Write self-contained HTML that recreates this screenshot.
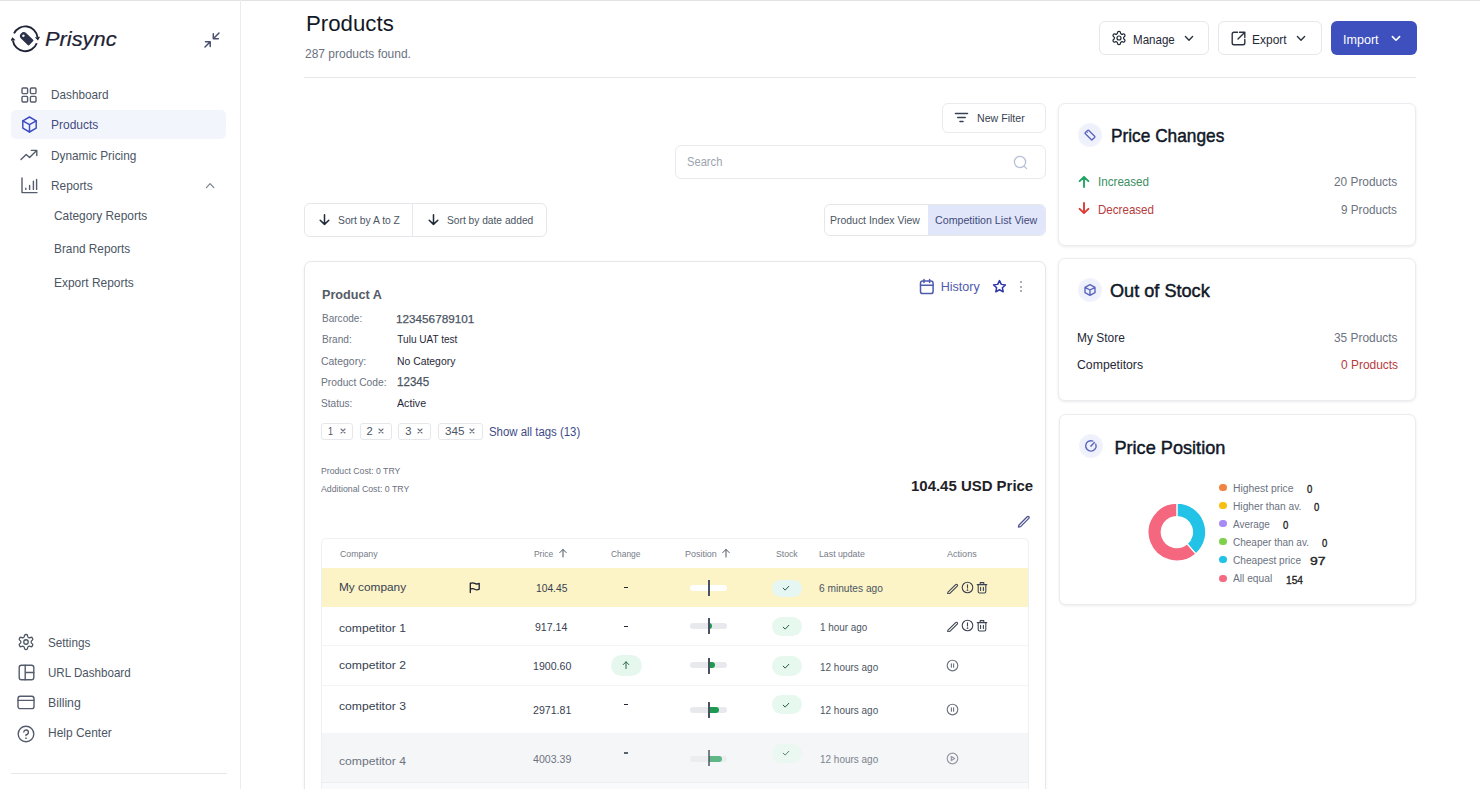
<!DOCTYPE html>
<html><head><meta charset="utf-8"><style>
html,body{margin:0;padding:0;background:#fff;width:1480px;height:789px;overflow:hidden;position:relative;}
.t{position:absolute;white-space:nowrap;font-family:"Liberation Sans",sans-serif;transform-origin:0 0;}
.r{position:absolute;box-sizing:border-box;}
</style></head><body>
<div class="r" style="left:0px;top:0px;width:1480px;height:1px;background:#e3e3e3"></div>
<div class="r" style="left:240px;top:0px;width:1px;height:789px;background:#ececec"></div>
<svg class="r" style="left:11px;top:24px;" width="30" height="30" viewBox="0 0 30 30" fill="none"><path d="M3.05 9.36 A12.4 12.4 0 0 1 26.48 13.07" stroke="#1f2436" stroke-width="1.9"/><path d="M25.78 19.24 A12.4 12.4 0 0 1 1.92 16.53" stroke="#1f2436" stroke-width="1.9"/><path d="M29.05 12.71 L23.90 13.44 L26.95 16.44 Z" fill="#1f2436"/><path d="M-0.65 16.89 L4.50 16.16 L1.45 13.16 Z" fill="#1f2436"/><g transform="rotate(43 15.15 14.3)"><path d="M11.9 10.55 H21.2 Q22.2 10.55 22.2 11.55 V17.05 Q22.2 18.05 21.2 18.05 H11.9 A3.75 3.75 0 0 1 11.9 10.55 Z" fill="#2b3148"/><circle cx="11.4" cy="14.3" r="1.25" fill="#fff"/></g></svg>
<div class="t" style="left:44.80px;top:29.63px;font-size:19.69px;line-height:19.69px;color:#1f2336;font-style:italic;transform:scaleX(1.1093);-webkit-text-stroke:0.2px #1f2336;">Prisync</div>
<svg class="r" style="left:203px;top:31px;" width="18" height="18" viewBox="0 0 18 18" fill="none"><path d="M16 2 L10.3 7.7 M10.3 2.7 V7.7 H15.3" stroke="#4b5070" stroke-width="1.5" stroke-linecap="round" stroke-linejoin="round"/><path d="M2 16 L7.2 10.7 M2.5 10.7 H7.2 V15.5" stroke="#4b5070" stroke-width="1.5" stroke-linecap="round" stroke-linejoin="round"/></svg>
<div class="r" style="left:11px;top:110px;width:215px;height:29px;background:#f3f5fd;border-radius:5px"></div>
<svg class="r" style="left:21px;top:87px;" width="16" height="16" viewBox="0 0 16 16" fill="none"><rect x="1" y="1" width="5.6" height="5.6" rx="1" stroke="#555c6b" stroke-width="1.4" stroke-linecap="round" stroke-linejoin="round"/><rect x="9.4" y="1" width="5.6" height="5.6" rx="1" stroke="#555c6b" stroke-width="1.4" stroke-linecap="round" stroke-linejoin="round"/><rect x="1" y="9.4" width="5.6" height="5.6" rx="1" stroke="#555c6b" stroke-width="1.4" stroke-linecap="round" stroke-linejoin="round"/><rect x="9.4" y="9.4" width="5.6" height="5.6" rx="1" stroke="#555c6b" stroke-width="1.4" stroke-linecap="round" stroke-linejoin="round"/></svg>
<svg class="r" style="left:21px;top:116px;" width="17" height="17" viewBox="0 0 17 17" fill="none"><path d="M8.5 1 L15.2 4.8 V12.2 L8.5 16 L1.8 12.2 V4.8 Z" stroke="#3b4bc4" stroke-width="1.45" stroke-linecap="round" stroke-linejoin="round"/><path d="M1.8 4.8 L8.5 8.6 L15.2 4.8 M8.5 8.6 V16" stroke="#3b4bc4" stroke-width="1.45" stroke-linecap="round" stroke-linejoin="round"/></svg>
<svg class="r" style="left:20px;top:149px;" width="18" height="12" viewBox="0 0 18 12" fill="none"><path d="M1 10.5 L6.2 5.5 L9.6 8.6 L16.6 1.6 M11.4 1.4 H16.8 V6.6" stroke="#555c6b" stroke-width="1.4" stroke-linecap="round" stroke-linejoin="round"/></svg>
<svg class="r" style="left:21px;top:177px;" width="17" height="17" viewBox="0 0 17 17" fill="none"><path d="M1 1 V15.6 H16" stroke="#555c6b" stroke-width="1.4" stroke-linecap="round" stroke-linejoin="round"/><path d="M4.8 12.4 V11.2 M8.6 12.4 V8.4 M12.4 12.4 V4.2 M15.6 12.4 V2.4" stroke="#555c6b" stroke-width="1.4" stroke-linecap="round" stroke-linejoin="round"/></svg>
<div class="t" style="left:50.80px;top:89.26px;font-size:12.57px;line-height:12.57px;color:#4b5563;transform:scaleX(0.9350);">Dashboard</div>
<div class="t" style="left:50.80px;top:119.26px;font-size:12.57px;line-height:12.57px;color:#434c7c;transform:scaleX(0.9533);">Products</div>
<div class="t" style="left:50.80px;top:149.96px;font-size:12.57px;line-height:12.57px;color:#4b5563;transform:scaleX(0.9404);">Dynamic Pricing</div>
<div class="t" style="left:50.80px;top:179.96px;font-size:12.57px;line-height:12.57px;color:#4b5563;transform:scaleX(0.9449);">Reports</div>
<svg class="r" style="left:204px;top:181px;" width="12" height="8" viewBox="0 0 12 8" fill="none"><path d="M2.4 6.6 L6.1 2.6 L9.8 6.6" stroke="#7d838e" stroke-width="1.25" stroke-linecap="round" stroke-linejoin="round"/></svg>
<div class="t" style="left:53.50px;top:210.26px;font-size:12.57px;line-height:12.57px;color:#4b5563;transform:scaleX(0.9460);">Category Reports</div>
<div class="t" style="left:53.50px;top:243.46px;font-size:12.57px;line-height:12.57px;color:#4b5563;transform:scaleX(0.9402);">Brand Reports</div>
<div class="t" style="left:53.50px;top:276.76px;font-size:12.57px;line-height:12.57px;color:#4b5563;transform:scaleX(0.9518);">Export Reports</div>
<svg class="r" style="left:17px;top:633px;" width="18" height="18" viewBox="0 0 24 24" fill="none"><path d="M12.22 2h-.44a2 2 0 0 0-2 2v.18a2 2 0 0 1-1 1.73l-.43.25a2 2 0 0 1-2 0l-.15-.08a2 2 0 0 0-2.73.73l-.22.38a2 2 0 0 0 .73 2.73l.15.1a2 2 0 0 1 1 1.72v.51a2 2 0 0 1-1 1.74l-.15.09a2 2 0 0 0-.73 2.73l.22.38a2 2 0 0 0 2.73.73l.15-.08a2 2 0 0 1 2 0l.43.25a2 2 0 0 1 1 1.73V20a2 2 0 0 0 2 2h.44a2 2 0 0 0 2-2v-.18a2 2 0 0 1 1-1.73l.43-.25a2 2 0 0 1 2 0l.15.08a2 2 0 0 0 2.73-.73l.22-.39a2 2 0 0 0-.73-2.73l-.15-.08a2 2 0 0 1-1-1.74v-.5a2 2 0 0 1 1-1.74l.15-.09a2 2 0 0 0 .73-2.73l-.22-.38a2 2 0 0 0-2.73-.73l-.15.08a2 2 0 0 1-2 0l-.43-.25a2 2 0 0 1-1-1.73V4a2 2 0 0 0-2-2z" stroke="#4b5563" stroke-width="1.7"/><circle cx="12" cy="12" r="3" stroke="#4b5563" stroke-width="1.7"/></svg>
<svg class="r" style="left:18px;top:664px;" width="17" height="17" viewBox="0 0 17 17" fill="none"><rect x="1.2" y="1.2" width="14.6" height="14.6" rx="2.2" stroke="#555c6b" stroke-width="1.4" stroke-linecap="round" stroke-linejoin="round"/><path d="M7.2 1.2 V15.8 M7.2 8.5 H15.8" stroke="#555c6b" stroke-width="1.4" stroke-linecap="round" stroke-linejoin="round"/></svg>
<svg class="r" style="left:17px;top:695px;" width="18" height="15" viewBox="0 0 18 15" fill="none"><rect x="1" y="1.2" width="16" height="12.4" rx="2.2" stroke="#555c6b" stroke-width="1.4" stroke-linecap="round" stroke-linejoin="round"/><path d="M1 5.4 H17" stroke="#555c6b" stroke-width="1.4" stroke-linecap="round" stroke-linejoin="round"/></svg>
<svg class="r" style="left:17px;top:725px;" width="18" height="18" viewBox="0 0 18 18" fill="none"><circle cx="9" cy="9" r="7.8" stroke="#555c6b" stroke-width="1.4" stroke-linecap="round" stroke-linejoin="round"/><path d="M6.8 7 A2.3 2.3 0 1 1 9 9.6 V10.6" stroke="#555c6b" stroke-width="1.4" stroke-linecap="round" stroke-linejoin="round"/><circle cx="9" cy="13.2" r="0.5" fill="#4b5563" stroke="#4b5563" stroke-width="0.8"/></svg>
<div class="t" style="left:47.60px;top:636.76px;font-size:12.57px;line-height:12.57px;color:#4b5563;transform:scaleX(0.9337);">Settings</div>
<div class="t" style="left:47.60px;top:666.76px;font-size:12.57px;line-height:12.57px;color:#4b5563;transform:scaleX(0.9224);">URL Dashboard</div>
<div class="t" style="left:47.60px;top:696.76px;font-size:12.57px;line-height:12.57px;color:#4b5563;transform:scaleX(0.9782);">Billing</div>
<div class="t" style="left:47.60px;top:726.76px;font-size:12.57px;line-height:12.57px;color:#4b5563;transform:scaleX(0.9514);">Help Center</div>
<div class="r" style="left:11px;top:773px;width:216px;height:1px;background:#e5e7eb"></div>
<div class="t" style="left:305.60px;top:12.23px;font-size:22.77px;line-height:22.77px;color:#111827;transform:scaleX(0.9770);">Products</div>
<div class="t" style="left:304.60px;top:47.54px;font-size:12.71px;line-height:12.71px;color:#6b7280;transform:scaleX(0.9435);">287 products found.</div>
<div class="r" style="left:304px;top:77px;width:1112px;height:1px;background:#e5e7eb"></div>
<div class="r" style="left:1099px;top:21px;width:110px;height:34px;border:1px solid #e5e7eb;border-radius:6px;background:#fff"></div>
<div class="r" style="left:1218px;top:21px;width:104px;height:34px;border:1px solid #e5e7eb;border-radius:6px;background:#fff"></div>
<div class="r" style="left:1331px;top:21px;width:86px;height:34px;background:#3e50bd;border-radius:6px"></div>
<svg class="r" style="left:1111px;top:30px;" width="16" height="16" viewBox="0 0 24 24" fill="none"><path d="M12.22 2h-.44a2 2 0 0 0-2 2v.18a2 2 0 0 1-1 1.73l-.43.25a2 2 0 0 1-2 0l-.15-.08a2 2 0 0 0-2.73.73l-.22.38a2 2 0 0 0 .73 2.730l.15.1a2 2 0 0 1 1 1.72v.51a2 2 0 0 1-1 1.74l-.15.09a2 2 0 0 0-.73 2.73l.22.38a2 2 0 0 0 2.73.73l.15-.08a2 2 0 0 1 2 0l.43.25a2 2 0 0 1 1 1.73V20a2 2 0 0 0 2 2h.44a2 2 0 0 0 2-2v-.18a2 2 0 0 1 1-1.73l.43-.25a2 2 0 0 1 2 0l.15.08a2 2 0 0 0 2.73-.73l.22-.39a2 2 0 0 0-.73-2.73l-.15-.08a2 2 0 0 1-1-1.74v-.5a2 2 0 0 1 1-1.74l.15-.09a2 2 0 0 0 .73-2.73l-.22-.38a2 2 0 0 0-2.73-.73l-.15.08a2 2 0 0 1-2 0l-.43-.25a2 2 0 0 1-1-1.73V4a2 2 0 0 0-2-2z" stroke="#1f2937" stroke-width="1.8"/><circle cx="12" cy="12" r="3" stroke="#1f2937" stroke-width="1.8"/></svg>
<div class="t" style="left:1133.20px;top:32.55px;font-size:13.41px;line-height:13.41px;color:#1f2937;transform:scaleX(0.8624);">Manage</div>
<svg class="r" style="left:1182px;top:34px;" width="14" height="9" viewBox="0 0 14 9" fill="none"><path d="M3.4 2.6 L7 6.2 L10.6 2.6" stroke="#2b3340" stroke-width="1.4" stroke-linecap="round" stroke-linejoin="round"/></svg>
<svg class="r" style="left:1230px;top:30px;" width="17" height="17" viewBox="0 0 17 17" fill="none"><path d="M7.5 2.2 H4 Q2.2 2.2 2.2 4 V13 Q2.2 14.8 4 14.8 H13 Q14.8 14.8 14.8 13 V9.5 M9.5 2.2 H14.8 V7.5 M14.6 2.4 L8 9" stroke="#2b3340" stroke-width="1.4" stroke-linecap="round" stroke-linejoin="round"/></svg>
<div class="t" style="left:1252.40px;top:32.55px;font-size:13.41px;line-height:13.41px;color:#1f2937;transform:scaleX(0.8929);">Export</div>
<svg class="r" style="left:1294px;top:34px;" width="14" height="9" viewBox="0 0 14 9" fill="none"><path d="M3.4 2.6 L7 6.2 L10.6 2.6" stroke="#2b3340" stroke-width="1.4" stroke-linecap="round" stroke-linejoin="round"/></svg>
<div class="t" style="left:1343.40px;top:32.55px;font-size:13.41px;line-height:13.41px;color:#ffffff;transform:scaleX(0.9366);">Import</div>
<svg class="r" style="left:1389px;top:34px;" width="14" height="9" viewBox="0 0 14 9" fill="none"><path d="M3.4 2.6 L7 6.2 L10.6 2.6" stroke="#fff" stroke-width="1.6" stroke-linecap="round" stroke-linejoin="round"/></svg>
<div class="r" style="left:942px;top:103px;width:104px;height:30px;border:1px solid #e8eaee;border-radius:6px;background:#fff"></div>
<svg class="r" style="left:954px;top:111px;" width="15" height="13" viewBox="0 0 15 13" fill="none"><path d="M1.5 2.5 H13.5 M3.8 6.5 H11.2 M6 10.5 H9" stroke="#374151" stroke-width="1.6" stroke-linecap="round"/></svg>
<div class="t" style="left:977.00px;top:113.31px;font-size:10.61px;line-height:10.61px;color:#374151;">New Filter</div>
<div class="r" style="left:675px;top:145px;width:371px;height:34px;border:1px solid #e8eaee;border-radius:6px;background:#fff"></div>
<div class="t" style="left:686.60px;top:157.25px;font-size:11.87px;line-height:11.87px;color:#9ca3af;transform:scaleX(0.9414);">Search</div>
<svg class="r" style="left:1013px;top:155px;" width="15" height="15" viewBox="0 0 15 15" fill="none"><circle cx="7" cy="7" r="5.6" stroke="#b9c0d6" stroke-width="1.3"/><path d="M11.2 11.2 L13.6 13.6" stroke="#b9c0d6" stroke-width="1.3" stroke-linecap="round"/></svg>
<div class="r" style="left:304px;top:203px;width:243px;height:34px;border:1px solid #e5e7eb;border-radius:6px;background:#fff"></div>
<div class="r" style="left:412px;top:203px;width:1px;height:34px;background:#e5e7eb"></div>
<svg class="r" style="left:318px;top:213px;" width="13" height="13" viewBox="0 0 13 13" fill="none"><path d="M6.5 1.8 V11.4 M2.2 7.2 L6.5 11.4 L10.8 7.2" stroke="#1f2937" stroke-width="1.5" stroke-linecap="round" stroke-linejoin="round"/></svg>
<div class="t" style="left:338.00px;top:215.26px;font-size:11.03px;line-height:11.03px;color:#4b5563;transform:scaleX(0.9362);">Sort by A to Z</div>
<svg class="r" style="left:427px;top:213px;" width="13" height="13" viewBox="0 0 13 13" fill="none"><path d="M6.5 1.8 V11.4 M2.2 7.2 L6.5 11.4 L10.8 7.2" stroke="#1f2937" stroke-width="1.5" stroke-linecap="round" stroke-linejoin="round"/></svg>
<div class="t" style="left:447.00px;top:215.26px;font-size:11.03px;line-height:11.03px;color:#4b5563;transform:scaleX(0.9267);">Sort by date added</div>
<div class="r" style="left:824px;top:204px;width:222px;height:32px;border:1px solid #e5e7eb;border-radius:6px;background:#fff;overflow:hidden"></div>
<div class="r" style="left:928px;top:205px;width:117px;height:30px;background:#e1e6fb;border-radius:0 5px 5px 0"></div>
<div class="t" style="left:830.40px;top:215.34px;font-size:11.17px;line-height:11.17px;color:#4b5563;transform:scaleX(0.9366);">Product Index View</div>
<div class="t" style="left:935.00px;top:215.34px;font-size:11.17px;line-height:11.17px;color:#3f4a7a;transform:scaleX(0.9556);">Competition List View</div>
<div class="r" style="left:304px;top:261px;width:742px;height:539px;border:1px solid #e6e7ea;border-radius:7px;background:#fff;box-shadow:0 1px 3px rgba(0,0,0,0.06)"></div>
<div class="t" style="left:322.00px;top:289.33px;font-size:12.01px;line-height:12.01px;color:#555b66;font-weight:bold;transform:scaleX(1.0504);">Product A</div>
<div class="t" style="left:321.60px;top:313.75px;font-size:10.34px;line-height:10.34px;color:#6b7280;transform:scaleX(0.9718);">Barcode:</div>
<div class="t" style="left:321.60px;top:334.95px;font-size:10.34px;line-height:10.34px;color:#6b7280;transform:scaleX(0.9782);">Brand:</div>
<div class="t" style="left:321.40px;top:357.05px;font-size:10.34px;line-height:10.34px;color:#6b7280;transform:scaleX(1.0111);">Category:</div>
<div class="t" style="left:321.40px;top:377.55px;font-size:10.34px;line-height:10.34px;color:#6b7280;transform:scaleX(0.9929);">Product Code:</div>
<div class="t" style="left:321.40px;top:398.55px;font-size:10.34px;line-height:10.34px;color:#6b7280;transform:scaleX(0.9761);">Status:</div>
<div class="t" style="left:396.40px;top:313.51px;font-size:11.45px;line-height:11.45px;color:#4b5563;transform:scaleX(1.0256);-webkit-text-stroke:0.25px #4b5563;">123456789101</div>
<div class="t" style="left:397.30px;top:335.09px;font-size:10.06px;line-height:10.06px;color:#1f2937;">Tulu UAT test</div>
<div class="t" style="left:396.50px;top:357.29px;font-size:10.06px;line-height:10.06px;color:#1f2937;transform:scaleX(1.0343);">No Category</div>
<div class="t" style="left:396.50px;top:375.66px;font-size:12.57px;line-height:12.57px;color:#4b5563;transform:scaleX(0.9243);-webkit-text-stroke:0.25px #4b5563;">12345</div>
<div class="t" style="left:396.50px;top:398.79px;font-size:10.06px;line-height:10.06px;color:#1f2937;transform:scaleX(1.0629);">Active</div>
<div class="r" style="left:321px;top:423px;width:32px;height:17px;border:1px solid #e5e7eb;border-radius:3px;background:#fff"></div>
<div class="t" style="left:328.20px;top:425.74px;font-size:11.17px;line-height:11.17px;color:#4b5563;transform:scaleX(0.8063);">1</div>
<svg class="r" style="left:339px;top:427px;" width="8" height="8" viewBox="0 0 8 8" fill="none"><path d="M2 2 L6 6 M6 2 L2 6" stroke="#6b7280" stroke-width="1.1" stroke-linecap="round"/></svg>
<div class="r" style="left:360px;top:423px;width:32px;height:17px;border:1px solid #e5e7eb;border-radius:3px;background:#fff"></div>
<div class="t" style="left:366.60px;top:425.74px;font-size:11.17px;line-height:11.17px;color:#4b5563;">2</div>
<svg class="r" style="left:377px;top:427px;" width="8" height="8" viewBox="0 0 8 8" fill="none"><path d="M2 2 L6 6 M6 2 L2 6" stroke="#6b7280" stroke-width="1.1" stroke-linecap="round"/></svg>
<div class="r" style="left:398px;top:423px;width:33px;height:17px;border:1px solid #e5e7eb;border-radius:3px;background:#fff"></div>
<div class="t" style="left:405.20px;top:425.74px;font-size:11.17px;line-height:11.17px;color:#4b5563;">3</div>
<svg class="r" style="left:416px;top:427px;" width="8" height="8" viewBox="0 0 8 8" fill="none"><path d="M2 2 L6 6 M6 2 L2 6" stroke="#6b7280" stroke-width="1.1" stroke-linecap="round"/></svg>
<div class="r" style="left:438px;top:423px;width:45px;height:17px;border:1px solid #e5e7eb;border-radius:3px;background:#fff"></div>
<div class="t" style="left:444.60px;top:425.74px;font-size:11.17px;line-height:11.17px;color:#4b5563;transform:scaleX(1.0466);">345</div>
<svg class="r" style="left:468px;top:427px;" width="8" height="8" viewBox="0 0 8 8" fill="none"><path d="M2 2 L6 6 M6 2 L2 6" stroke="#6b7280" stroke-width="1.1" stroke-linecap="round"/></svg>
<div class="t" style="left:488.70px;top:425.93px;font-size:12.01px;line-height:12.01px;color:#3e4a89;transform:scaleX(0.9496);">Show all tags (13)</div>
<div class="t" style="left:321.40px;top:467.03px;font-size:8.94px;line-height:8.94px;color:#6b7280;transform:scaleX(0.9736);">Product Cost: 0 TRY</div>
<div class="t" style="left:321.40px;top:485.23px;font-size:8.94px;line-height:8.94px;color:#6b7280;transform:scaleX(0.9811);">Additional Cost: 0 TRY</div>
<svg class="r" style="left:919px;top:278px;" width="16" height="17" viewBox="0 0 16 17" fill="none"><rect x="1.5" y="3" width="12.6" height="12.6" rx="2.2" stroke="#4f5bab" stroke-width="1.5" stroke-linecap="round" stroke-linejoin="round"/><path d="M1.5 7.2 H14.1 M5 1.4 V4.4 M10.6 1.4 V4.4" stroke="#4f5bab" stroke-width="1.5" stroke-linecap="round" stroke-linejoin="round"/></svg>
<div class="t" style="left:940.70px;top:281.26px;font-size:12.57px;line-height:12.57px;color:#4f5bab;">History</div>
<svg class="r" style="left:992px;top:279px;" width="15" height="15" viewBox="0 0 24 24" fill="none"><path d="M12 2.5 L14.9 8.6 L21.5 9.4 L16.6 13.9 L17.9 20.5 L12 17.2 L6.1 20.5 L7.4 13.9 L2.5 9.4 L9.1 8.6 Z" stroke="#2c36a8" stroke-width="2.4" stroke-linejoin="round"/></svg>
<div class="r" style="left:1020.4px;top:281.2px;width:2.1px;height:2.1px;border-radius:50%;background:#8f959f"></div>
<div class="r" style="left:1020.4px;top:285.6px;width:2.1px;height:2.1px;border-radius:50%;background:#8f959f"></div>
<div class="r" style="left:1020.4px;top:290.0px;width:2.1px;height:2.1px;border-radius:50%;background:#8f959f"></div>
<div class="t" style="left:911.20px;top:477.60px;font-size:15.36px;line-height:15.36px;color:#1f2328;font-weight:bold;transform:scaleX(0.9733);">104.45 USD Price</div>
<svg class="r" style="left:1016px;top:513px;" width="15" height="15" viewBox="0 0 15 15" fill="none"><path d="M3 12 L11.2 3.8 Q12 3 12.8 3.8 Q13.6 4.6 12.8 5.4 L4.6 13.6 L2.4 14 Z" stroke="#4f5590" stroke-width="1.3" stroke-linejoin="round"/></svg>
<div class="r" style="left:321px;top:538px;width:708px;height:262px;border:1px solid #eef0f2;border-radius:5px;background:#fff"></div>
<div class="t" style="left:339.60px;top:549.06px;font-size:9.50px;line-height:9.50px;color:#767c88;transform:scaleX(0.9250);">Company</div>
<div class="t" style="left:534.30px;top:549.06px;font-size:9.50px;line-height:9.50px;color:#767c88;transform:scaleX(0.8877);">Price</div>
<div class="t" style="left:611.30px;top:549.06px;font-size:9.50px;line-height:9.50px;color:#767c88;transform:scaleX(0.8838);">Change</div>
<div class="t" style="left:684.90px;top:549.06px;font-size:9.50px;line-height:9.50px;color:#767c88;transform:scaleX(0.9412);">Position</div>
<div class="t" style="left:775.50px;top:549.06px;font-size:9.50px;line-height:9.50px;color:#767c88;transform:scaleX(0.9130);">Stock</div>
<div class="t" style="left:818.90px;top:549.06px;font-size:9.50px;line-height:9.50px;color:#767c88;transform:scaleX(0.9225);">Last update</div>
<div class="t" style="left:947.30px;top:549.06px;font-size:9.50px;line-height:9.50px;color:#767c88;transform:scaleX(0.9534);">Actions</div>
<svg class="r" style="left:558px;top:548px;" width="10" height="10" viewBox="0 0 10 10" fill="none"><path d="M5 9 V1.6 M1.8 4.6 L5 1.4 L8.2 4.6" stroke="#4b5563" stroke-width="1.0" stroke-linecap="round" stroke-linejoin="round"/></svg>
<svg class="r" style="left:721px;top:548px;" width="10" height="10" viewBox="0 0 10 10" fill="none"><path d="M5 9 V1.6 M1.8 4.6 L5 1.4 L8.2 4.6" stroke="#4b5563" stroke-width="1.0" stroke-linecap="round" stroke-linejoin="round"/></svg>
<div class="r" style="left:322px;top:568px;width:706px;height:39px;background:#fcf3c6"></div>
<div class="r" style="left:322px;top:645px;width:706px;height:1px;background:#f3f4f6"></div>
<div class="r" style="left:322px;top:685px;width:706px;height:1px;background:#f3f4f6"></div>
<div class="r" style="left:322px;top:733px;width:706px;height:49px;background:#f5f6f8"></div>
<div class="r" style="left:322px;top:782px;width:706px;height:1px;background:#eceef1"></div>
<div class="r" style="left:322px;top:783px;width:706px;height:17px;background:#f9fafb"></div>
<div class="t" style="left:339.00px;top:582.01px;font-size:11.45px;line-height:11.45px;color:#374151;transform:scaleX(1.0353);">My company</div>
<div class="t" style="left:535.90px;top:583.89px;font-size:10.06px;line-height:10.06px;color:#374151;transform:scaleX(1.0213);">104.45</div>
<div class="t" style="left:818.90px;top:583.21px;font-size:10.61px;line-height:10.61px;color:#4b5563;transform:scaleX(0.9582);">6 minutes ago</div>
<div class="r" style="left:624.2px;top:587.1px;width:3.4px;height:1.4px;background:#1f2937;"></div>
<div class="r" style="left:772px;top:580px;width:30px;height:17px;background:#e6f7f3;border-radius:10px;"></div>
<svg class="r" style="left:781px;top:583px;" width="10" height="10" viewBox="0 0 10 10" fill="none"><path d="M2.2 5.2 L4.2 7.1 L7.8 3.3" stroke="#245c40" stroke-width="1.0" stroke-linecap="round" stroke-linejoin="round"/></svg>
<div class="r" style="left:690px;top:585px;width:37px;height:6px;background:#ffffff;border-radius:3px;"></div>
<div class="r" style="left:708.1px;top:580px;width:1.6px;height:16px;background:#4a5160;"></div>
<svg class="r" style="left:946px;top:581px;" width="13" height="13" viewBox="0 0 13 13" fill="none"><path d="M2 11.2 L9.4 3.8 Q10.4 2.8 11.2 3.6 Q12 4.4 11 5.4 L3.6 12.6 L1.6 12.8 Z" stroke="#3d4451" stroke-width="1.1" stroke-linecap="round" stroke-linejoin="round"/></svg>
<svg class="r" style="left:961px;top:581px;" width="13" height="13" viewBox="0 0 13 13" fill="none"><circle cx="6.5" cy="6.5" r="5.3" stroke="#3d4451" stroke-width="1.1" stroke-linecap="round" stroke-linejoin="round"/><path d="M6.5 3.8 V7" stroke="#3d4451" stroke-width="1.1" stroke-linecap="round" stroke-linejoin="round"/><circle cx="6.5" cy="9.2" r="0.3" stroke="#3d4451" stroke-width="1.1" stroke-linecap="round" stroke-linejoin="round"/></svg>
<svg class="r" style="left:976px;top:581px;" width="12" height="13" viewBox="0 0 12 13" fill="none"><path d="M2.2 3.6 H9.8 V10.6 Q9.8 12 8.4 12 H3.6 Q2.2 12 2.2 10.6 Z M1.2 3.6 H10.8 M4.2 3.6 V1.6 H7.8 V3.6 M4.6 6.2 V9.4 M7.4 6.2 V9.4" stroke="#3d4451" stroke-width="1.1" stroke-linecap="round" stroke-linejoin="round"/></svg>
<div class="t" style="left:339.00px;top:623.21px;font-size:11.45px;line-height:11.45px;color:#374151;transform:scaleX(1.0632);">competitor 1</div>
<div class="t" style="left:535.40px;top:622.79px;font-size:10.06px;line-height:10.06px;color:#374151;transform:scaleX(1.0505);">917.14</div>
<div class="t" style="left:819.70px;top:622.31px;font-size:10.61px;line-height:10.61px;color:#4b5563;transform:scaleX(0.9337);">1 hour ago</div>
<div class="r" style="left:624.2px;top:625.8px;width:3.4px;height:1.4px;background:#1f2937;"></div>
<div class="r" style="left:772px;top:617px;width:30px;height:19px;background:#e7f8ee;border-radius:10px;"></div>
<svg class="r" style="left:781px;top:622px;" width="10" height="10" viewBox="0 0 10 10" fill="none"><path d="M2.2 5.2 L4.2 7.1 L7.8 3.3" stroke="#245c40" stroke-width="1.0" stroke-linecap="round" stroke-linejoin="round"/></svg>
<div class="r" style="left:690px;top:623px;width:37px;height:6px;background:#e8e9ec;border-radius:3px;"></div>
<div class="r" style="left:709px;top:623px;width:3px;height:6px;background:#1c9a52;border-radius:0 3px 3px 0"></div>
<div class="r" style="left:708.1px;top:618px;width:1.6px;height:16px;background:#4a5160;"></div>
<svg class="r" style="left:946px;top:619px;" width="13" height="13" viewBox="0 0 13 13" fill="none"><path d="M2 11.2 L9.4 3.8 Q10.4 2.8 11.2 3.6 Q12 4.4 11 5.4 L3.6 12.6 L1.6 12.8 Z" stroke="#3d4451" stroke-width="1.1" stroke-linecap="round" stroke-linejoin="round"/></svg>
<svg class="r" style="left:961px;top:619px;" width="13" height="13" viewBox="0 0 13 13" fill="none"><circle cx="6.5" cy="6.5" r="5.3" stroke="#3d4451" stroke-width="1.1" stroke-linecap="round" stroke-linejoin="round"/><path d="M6.5 3.8 V7" stroke="#3d4451" stroke-width="1.1" stroke-linecap="round" stroke-linejoin="round"/><circle cx="6.5" cy="9.2" r="0.3" stroke="#3d4451" stroke-width="1.1" stroke-linecap="round" stroke-linejoin="round"/></svg>
<svg class="r" style="left:976px;top:619px;" width="12" height="13" viewBox="0 0 12 13" fill="none"><path d="M2.2 3.6 H9.8 V10.6 Q9.8 12 8.4 12 H3.6 Q2.2 12 2.2 10.6 Z M1.2 3.6 H10.8 M4.2 3.6 V1.6 H7.8 V3.6 M4.6 6.2 V9.4 M7.4 6.2 V9.4" stroke="#3d4451" stroke-width="1.1" stroke-linecap="round" stroke-linejoin="round"/></svg>
<div class="t" style="left:339.00px;top:660.41px;font-size:11.45px;line-height:11.45px;color:#374151;transform:scaleX(1.0632);">competitor 2</div>
<div class="t" style="left:533.00px;top:661.59px;font-size:10.06px;line-height:10.06px;color:#374151;transform:scaleX(1.0536);">1900.60</div>
<div class="t" style="left:819.70px;top:661.61px;font-size:10.61px;line-height:10.61px;color:#4b5563;transform:scaleX(0.9393);">12 hours ago</div>
<div class="r" style="left:611px;top:655px;width:31px;height:21px;background:#e6f8ee;border-radius:11px"></div>
<svg class="r" style="left:621px;top:660px;" width="10" height="10" viewBox="0 0 10 10" fill="none"><path d="M5 8.6 V1.8 M2.2 4.6 L5 1.8 L7.8 4.6" stroke="#2a6647" stroke-width="1.0" stroke-linecap="round" stroke-linejoin="round"/></svg>
<div class="r" style="left:772px;top:656px;width:30px;height:20px;background:#e7f8ee;border-radius:10px;"></div>
<svg class="r" style="left:781px;top:661px;" width="10" height="10" viewBox="0 0 10 10" fill="none"><path d="M2.2 5.2 L4.2 7.1 L7.8 3.3" stroke="#245c40" stroke-width="1.0" stroke-linecap="round" stroke-linejoin="round"/></svg>
<div class="r" style="left:690px;top:662px;width:37px;height:6px;background:#e8e9ec;border-radius:3px;"></div>
<div class="r" style="left:709px;top:662px;width:6px;height:6px;background:#1c9a52;border-radius:0 3px 3px 0"></div>
<div class="r" style="left:708.1px;top:658px;width:1.6px;height:16px;background:#4a5160;"></div>
<svg class="r" style="left:946px;top:659px;" width="13" height="13" viewBox="0 0 13 13" fill="none"><circle cx="6.5" cy="6.5" r="5.3" stroke="#6f7582" stroke-width="1.15" stroke-linecap="round" stroke-linejoin="round"/><path d="M5.4 4.8 V8.2 M7.6 4.8 V8.2" stroke="#6f7582" stroke-width="1.15" stroke-linecap="round" stroke-linejoin="round"/></svg>
<div class="t" style="left:339.00px;top:701.11px;font-size:11.45px;line-height:11.45px;color:#374151;transform:scaleX(1.0632);">competitor 3</div>
<div class="t" style="left:533.00px;top:705.89px;font-size:10.06px;line-height:10.06px;color:#374151;transform:scaleX(1.0536);">2971.81</div>
<div class="t" style="left:819.70px;top:705.41px;font-size:10.61px;line-height:10.61px;color:#4b5563;transform:scaleX(0.9393);">12 hours ago</div>
<div class="r" style="left:624.2px;top:703.6px;width:3.4px;height:1.4px;background:#1f2937;"></div>
<div class="r" style="left:772px;top:695px;width:30px;height:19px;background:#e7f8ee;border-radius:10px;"></div>
<svg class="r" style="left:781px;top:700px;" width="10" height="10" viewBox="0 0 10 10" fill="none"><path d="M2.2 5.2 L4.2 7.1 L7.8 3.3" stroke="#245c40" stroke-width="1.0" stroke-linecap="round" stroke-linejoin="round"/></svg>
<div class="r" style="left:690px;top:707px;width:37px;height:6px;background:#e8e9ec;border-radius:3px;"></div>
<div class="r" style="left:709px;top:707px;width:10px;height:6px;background:#1c9a52;border-radius:0 3px 3px 0"></div>
<div class="r" style="left:708.1px;top:702px;width:1.6px;height:16px;background:#4a5160;"></div>
<svg class="r" style="left:946px;top:703px;" width="13" height="13" viewBox="0 0 13 13" fill="none"><circle cx="6.5" cy="6.5" r="5.3" stroke="#6f7582" stroke-width="1.15" stroke-linecap="round" stroke-linejoin="round"/><path d="M5.4 4.8 V8.2 M7.6 4.8 V8.2" stroke="#6f7582" stroke-width="1.15" stroke-linecap="round" stroke-linejoin="round"/></svg>
<div class="t" style="left:339.00px;top:755.71px;font-size:11.45px;line-height:11.45px;color:#374151;transform:scaleX(1.0632);opacity:0.72;">competitor 4</div>
<div class="t" style="left:533.00px;top:754.59px;font-size:10.06px;line-height:10.06px;color:#374151;transform:scaleX(1.0536);opacity:0.72;">4003.39</div>
<div class="t" style="left:819.70px;top:754.11px;font-size:10.61px;line-height:10.61px;color:#4b5563;transform:scaleX(0.9393);opacity:0.72;">12 hours ago</div>
<div class="r" style="left:624.2px;top:752.3px;width:3.4px;height:1.4px;background:#1f2937;opacity:0.72;"></div>
<div class="r" style="left:772px;top:744px;width:30px;height:19px;background:#e7f8ee;border-radius:10px;opacity:0.72;"></div>
<svg class="r" style="left:781px;top:748px;opacity:0.72;" width="10" height="10" viewBox="0 0 10 10" fill="none"><path d="M2.2 5.2 L4.2 7.1 L7.8 3.3" stroke="#245c40" stroke-width="1.0" stroke-linecap="round" stroke-linejoin="round"/></svg>
<div class="r" style="left:690px;top:756px;width:37px;height:6px;background:#e8e9ec;border-radius:3px;opacity:0.72;"></div>
<div class="r" style="left:709px;top:756px;width:13px;height:6px;background:#5fb785;border-radius:0 3px 3px 0"></div>
<div class="r" style="left:708.1px;top:750px;width:1.6px;height:16px;background:#4a5160;opacity:0.72;"></div>
<svg class="r" style="left:946px;top:752px;opacity:0.72;" width="13" height="13" viewBox="0 0 13 13" fill="none"><circle cx="6.5" cy="6.5" r="5.3" stroke="#6f7582" stroke-width="1.15" stroke-linecap="round" stroke-linejoin="round"/><path d="M5.3 4.4 L8.6 6.5 L5.3 8.6 Z" stroke="#6f7582" stroke-width="1.15" stroke-linecap="round" stroke-linejoin="round"/></svg>
<svg class="r" style="left:468px;top:580px;" width="14" height="14" viewBox="0 0 14 14" fill="none"><path d="M2.3 12.6 V3.2 M2.3 3.4 Q4.5 2.2 6.7 3.4 Q8.9 4.6 11.2 3.4 V9.2 Q8.9 10.4 6.7 9.2 Q4.5 8 2.3 9.2" stroke="#1a1f2b" stroke-width="1.3" stroke-linecap="round" stroke-linejoin="round"/></svg>
<div class="r" style="left:1058px;top:103px;width:358px;height:143px;border:1px solid #ebecef;border-radius:7px;background:#fff;box-shadow:0 1px 3px rgba(0,0,0,0.08)"></div>
<div class="r" style="left:1058px;top:258px;width:358px;height:143px;border:1px solid #ebecef;border-radius:7px;background:#fff;box-shadow:0 1px 3px rgba(0,0,0,0.08)"></div>
<div class="r" style="left:1059px;top:414px;width:357px;height:191px;border:1px solid #ebecef;border-radius:7px;background:#fff;box-shadow:0 1px 3px rgba(0,0,0,0.08)"></div>
<div class="r" style="left:1078.3px;top:123.3px;width:24px;height:24px;border-radius:50%;background:radial-gradient(circle,#eef0fb 50%,#f7f8fd 100%)"></div>
<div class="r" style="left:1078.2px;top:278.2px;width:24px;height:24px;border-radius:50%;background:radial-gradient(circle,#eef0fb 50%,#f7f8fd 100%)"></div>
<div class="r" style="left:1079.3px;top:434.3px;width:24px;height:24px;border-radius:50%;background:radial-gradient(circle,#eef0fb 50%,#f7f8fd 100%)"></div>
<svg class="r" style="left:1083px;top:128px;" width="14" height="14" viewBox="0 0 14 14" fill="none"><path d="M2.4 4.6 L4.6 2.4 Q5.2 1.8 5.8 2.4 L11.6 8.2 Q12.2 8.8 11.6 9.4 L9.4 11.6 Q8.8 12.2 8.2 11.6 L2.4 5.8 Q1.8 5.2 2.4 4.6 Z" stroke="#5b66c0" stroke-width="1.4" stroke-linecap="round" stroke-linejoin="round"/><circle cx="4.6" cy="4.6" r="0.5" fill="#5b66c0"/></svg>
<svg class="r" style="left:1083px;top:283px;" width="14" height="14" viewBox="0 0 14 14" fill="none"><path d="M7 1.6 L12 4.3 V9.7 L7 12.4 L2 9.7 V4.3 Z M2 4.3 L7 7 L12 4.3 M7 7 V12.4" stroke="#5b66c0" stroke-width="1.4" stroke-linecap="round" stroke-linejoin="round"/></svg>
<svg class="r" style="left:1084px;top:439px;" width="14" height="14" viewBox="0 0 14 14" fill="none"><path d="M11.8 5.2 A5.2 5.2 0 1 1 8.8 2.1" stroke="#5b66c0" stroke-width="1.4" stroke-linecap="round" stroke-linejoin="round"/><path d="M7 7 L10.4 3.6" stroke="#5b66c0" stroke-width="1.4" stroke-linecap="round" stroke-linejoin="round"/><circle cx="7" cy="7" r="0.6" fill="#5b66c0"/></svg>
<div class="t" style="left:1110.50px;top:127.67px;font-size:17.88px;line-height:17.88px;color:#111827;transform:scaleX(0.9670);-webkit-text-stroke:0.45px #111827;">Price Changes</div>
<div class="t" style="left:1110.40px;top:282.80px;font-size:17.60px;line-height:17.60px;color:#111827;transform:scaleX(1.0302);-webkit-text-stroke:0.45px #111827;">Out of Stock</div>
<div class="t" style="left:1114.40px;top:438.73px;font-size:18.16px;line-height:18.16px;color:#111827;-webkit-text-stroke:0.45px #111827;">Price Position</div>
<svg class="r" style="left:1077px;top:175px;" width="14" height="13" viewBox="0 0 14 13" fill="none"><path d="M7 12 V2 M2.6 6.2 L7 1.8 L11.4 6.2" stroke="#23a565" stroke-width="1.9" stroke-linecap="round" stroke-linejoin="round"/></svg>
<svg class="r" style="left:1077px;top:202px;" width="14" height="13" viewBox="0 0 14 13" fill="none"><path d="M7 1 V11 M2.6 6.8 L7 11.2 L11.4 6.8" stroke="#dc3a34" stroke-width="1.9" stroke-linecap="round" stroke-linejoin="round"/></svg>
<div class="t" style="left:1098.10px;top:176.48px;font-size:12.43px;line-height:12.43px;color:#3c8f63;transform:scaleX(0.9359);">Increased</div>
<div class="t" style="left:1098.10px;top:203.98px;font-size:12.43px;line-height:12.43px;color:#b63b3d;transform:scaleX(0.9318);">Decreased</div>
<div class="t" style="left:1334.10px;top:176.48px;font-size:12.43px;line-height:12.43px;color:#6b7280;transform:scaleX(0.9541);">20 Products</div>
<div class="t" style="left:1341.40px;top:203.98px;font-size:12.43px;line-height:12.43px;color:#6b7280;transform:scaleX(0.9425);">9 Products</div>
<div class="t" style="left:1076.80px;top:331.78px;font-size:12.43px;line-height:12.43px;color:#1f2937;transform:scaleX(0.9614);">My Store</div>
<div class="t" style="left:1076.80px;top:358.78px;font-size:12.43px;line-height:12.43px;color:#1f2937;transform:scaleX(0.9866);">Competitors</div>
<div class="t" style="left:1334.10px;top:331.78px;font-size:12.43px;line-height:12.43px;color:#6b7280;transform:scaleX(0.9571);">35 Products</div>
<div class="t" style="left:1340.50px;top:358.78px;font-size:12.43px;line-height:12.43px;color:#b63b3d;transform:scaleX(0.9610);">0 Products</div>
<svg class="r" style="left:1140px;top:500px;" width="75" height="70" viewBox="0 0 75 70" fill="none"><path d="M36.90 3.20 A28.9 28.9 0 0 1 55.81 53.95 L47.11 43.90 A15.6 15.6 0 0 0 36.90 16.50 Z" fill="#22c3e6" stroke="#fff" stroke-width="1.2"/><path d="M55.81 53.95 A28.9 28.9 0 1 1 36.90 3.20 L36.90 16.50 A15.6 15.6 0 1 0 47.11 43.90 Z" fill="#f4677f" stroke="#fff" stroke-width="1.2"/></svg>
<div class="r" style="left:1219.1px;top:483.7px;width:7.6px;height:7.6px;border-radius:50%;background:#f08440"></div>
<div class="t" style="left:1233.10px;top:482.51px;font-size:10.61px;line-height:10.61px;color:#6b7280;transform:scaleX(0.9768);">Highest price</div>
<div class="t" style="left:1306.70px;top:483.78px;font-size:10.89px;line-height:10.89px;color:#222;transform:scaleX(0.8766);-webkit-text-stroke:0.35px #222;">0</div>
<div class="r" style="left:1219.1px;top:501.9px;width:7.6px;height:7.6px;border-radius:50%;background:#f5c012"></div>
<div class="t" style="left:1233.10px;top:500.71px;font-size:10.61px;line-height:10.61px;color:#6b7280;transform:scaleX(0.9607);">Higher than av.</div>
<div class="t" style="left:1313.70px;top:501.98px;font-size:10.89px;line-height:10.89px;color:#222;transform:scaleX(0.8766);-webkit-text-stroke:0.35px #222;">0</div>
<div class="r" style="left:1219.1px;top:519.7px;width:7.6px;height:7.6px;border-radius:50%;background:#a78bf5"></div>
<div class="t" style="left:1233.10px;top:518.51px;font-size:10.61px;line-height:10.61px;color:#6b7280;transform:scaleX(0.9377);">Average</div>
<div class="t" style="left:1282.70px;top:519.78px;font-size:10.89px;line-height:10.89px;color:#222;transform:scaleX(0.8766);-webkit-text-stroke:0.35px #222;">0</div>
<div class="r" style="left:1219.1px;top:537.7px;width:7.6px;height:7.6px;border-radius:50%;background:#7fd04a"></div>
<div class="t" style="left:1233.10px;top:536.51px;font-size:10.61px;line-height:10.61px;color:#6b7280;transform:scaleX(0.9424);">Cheaper than av.</div>
<div class="t" style="left:1321.70px;top:537.78px;font-size:10.89px;line-height:10.89px;color:#222;transform:scaleX(0.8766);-webkit-text-stroke:0.35px #222;">0</div>
<div class="r" style="left:1219.1px;top:555.9px;width:7.6px;height:7.6px;border-radius:50%;background:#22c3e6"></div>
<div class="t" style="left:1233.10px;top:554.71px;font-size:10.61px;line-height:10.61px;color:#6b7280;transform:scaleX(0.9537);">Cheapest price</div>
<div class="t" style="left:1310.30px;top:555.98px;font-size:10.89px;line-height:10.89px;color:#222;transform:scaleX(1.2872);-webkit-text-stroke:0.35px #222;">97</div>
<div class="r" style="left:1219.1px;top:574.5px;width:7.6px;height:7.6px;border-radius:50%;background:#f26b83"></div>
<div class="t" style="left:1233.10px;top:573.31px;font-size:10.61px;line-height:10.61px;color:#6b7280;transform:scaleX(0.9630);">All equal</div>
<div class="t" style="left:1285.70px;top:574.58px;font-size:10.89px;line-height:10.89px;color:#222;transform:scaleX(0.9358);-webkit-text-stroke:0.35px #222;">154</div>
</body></html>
